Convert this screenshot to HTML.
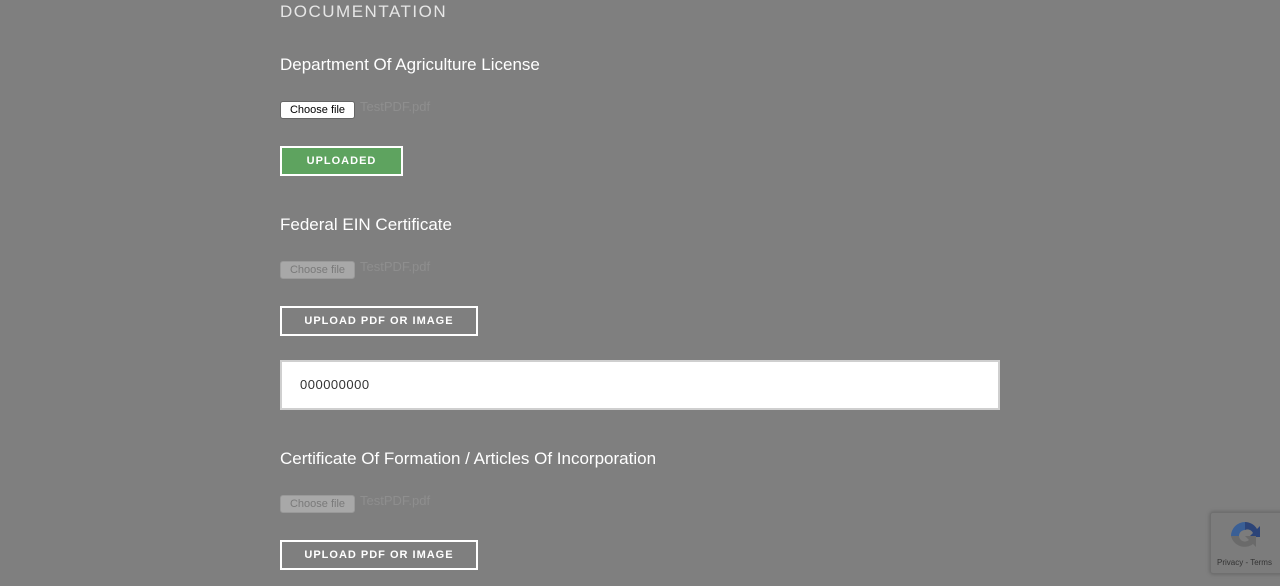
<!DOCTYPE html>
<html><head><style>
html,body{margin:0;width:1280px;height:586px;overflow:hidden;background:#7f7f7f;font-family:"Liberation Sans",sans-serif;}
.a{position:absolute;}
.h{left:280px;top:2px;color:#e6e6e6;font-size:17px;letter-spacing:1.5px;}
.lbl{left:280px;color:#fff;font-size:17px;}
.cf{left:280px;width:73px;height:16px;border-radius:3px;font-size:11px;text-align:center;line-height:16px;border:1px solid #666;}
.fn{left:360px;color:#8e8e8e;font-size:13px;}
.btn{left:280px;height:26px;border:2px solid #fff;color:#fff;font-size:11px;font-weight:bold;letter-spacing:1px;text-align:center;line-height:26px;}
</style></head><body>
<div class="a h">DOCUMENTATION</div>
<div class="a lbl" style="top:55px">Department Of Agriculture License</div>
<div class="a cf" style="top:101px;background:#fff;color:#000">Choose file</div>
<div class="a fn" style="top:99px">TestPDF.pdf</div>
<div class="a btn" style="top:146px;width:119px;background:#5ea35f">UPLOADED</div>
<div class="a lbl" style="top:215px">Federal EIN Certificate</div>
<div class="a cf" style="top:261px;background:#a8a8a8;color:#7a7a7a;border-color:#999">Choose file</div>
<div class="a fn" style="top:259px">TestPDF.pdf</div>
<div class="a btn" style="top:306px;width:194px">UPLOAD PDF OR IMAGE</div>
<div class="a" style="left:280px;top:360px;height:46px;background:#fff;border:2px solid #cfcfcf;font-size:13px;line-height:46px;padding-left:18px;width:698px;color:#333;letter-spacing:0.5px">000000000</div>
<div class="a lbl" style="top:449px">Certificate Of Formation / Articles Of Incorporation</div>
<div class="a cf" style="top:495px;background:#a8a8a8;color:#7a7a7a;border-color:#999">Choose file</div>
<div class="a fn" style="top:493px">TestPDF.pdf</div>
<div class="a btn" style="top:540px;width:194px">UPLOAD PDF OR IMAGE</div>
<div class="a" style="left:1210px;top:512px;width:80px;height:60px;background:#7c7c7c;border:1px solid #6f6f6f;border-radius:3px;box-shadow:0 0 4px rgba(0,0,0,.25)">
<svg width="40" height="40" viewBox="0 0 40 40" style="position:absolute;left:14px;top:3px">
<path d="M6 20a14 14 0 0 1 14-14v8a6 6 0 0 0-6 6z" fill="#3a5f95"/>
<path d="M20 6a14 14 0 0 1 12 7l3-3v11h-11l4-4a6 6 0 0 0-8-3z" fill="#2c4478"/>
<path d="M6 20h8a6 6 0 0 0 10 4l-4-4h11v11l-3-3a14 14 0 0 1-22-8z" fill="#6a6a6a"/>
</svg>
<div style="position:absolute;left:6px;top:45px;font-size:8px;color:#333">Privacy - Terms</div>
</div>
</body></html>
